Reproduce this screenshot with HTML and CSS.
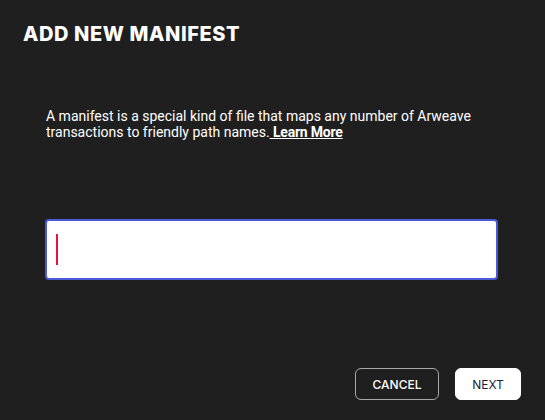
FILE: index.html
```html
<!DOCTYPE html>
<html>
<head>
<meta charset="utf-8">
<link rel="stylesheet" href="styles.css">
</head>
<body>
<div class="dialog">
  <h1 class="title">ADD NEW MANIFEST</h1>
  <div class="desc">
    <div class="line">A manifest is a special kind of file that maps any number of Arweave</div>
    <div class="line">transactions to friendly path names.<a class="learn" href="#">&nbsp;Learn More</a></div>
  </div>
  <div class="field"><span class="caret"></span></div>
  <div class="actions">
    <button class="btn btn-outline">CANCEL</button>
    <button class="btn btn-solid">NEXT</button>
  </div>
</div>
</body>
</html>
```

FILE: styles.css
```css
html, body {
  margin: 0;
  padding: 0;
  background: #1f1f1f;
}
.dialog {
  width: 545px;
  height: 420px;
  box-sizing: border-box;
  display: flex;
  flex-direction: column;
  padding: 22px 24px 0 23px;
}
.title {
  margin: 0;
  font-family: "Inter", sans-serif;
  font-weight: 800;
  font-size: 20px;
  line-height: 24px;
  color: #ffffff;
  letter-spacing: 0.6px;
}
.desc {
  margin: 62px 0 0 23px;
  font-family: "Roboto", sans-serif;
  font-size: 14px;
  line-height: 16px;
  color: #ffffff;
  width: 440px;
}
.line {
  white-space: nowrap;
}
.learn {
  color: #ffffff;
  font-weight: 700;
  letter-spacing: -0.2px;
  text-decoration: underline;
}
.field {
  margin: 79px 0 0 22px;
  width: 453px;
  height: 61px;
  box-sizing: border-box;
  border: 2px solid #4a5ad6;
  border-radius: 4px;
  background: #ffffff;
  display: flex;
  align-items: center;
  padding-left: 9px;
}
.caret {
  width: 2px;
  height: 31px;
  background: #e8133f;
}
.actions {
  margin-top: 88px;
  display: flex;
  justify-content: flex-end;
  gap: 16px;
}
.btn {
  height: 32px;
  border-radius: 6px;
  font-family: "Inter", sans-serif;
  font-weight: 500;
  font-size: 12px;
  padding: 0;
  cursor: pointer;
}
.btn-outline {
  width: 84px;
  background: transparent;
  color: #ffffff;
  border: 1px solid #a8a8a8;
}
.btn-solid {
  width: 66px;
  background: #ffffff;
  color: #1c1c3a;
  font-weight: 400;
  border: 1px solid #ffffff;
}
```
